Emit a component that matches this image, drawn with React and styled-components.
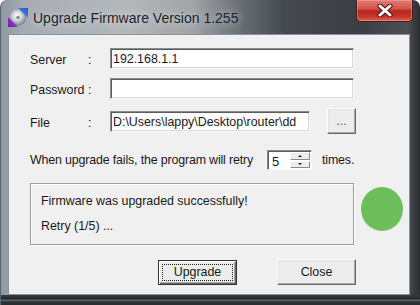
import React from "react"
import styled, { createGlobalStyle } from "styled-components"

const GlobalStyle = createGlobalStyle`
  html, body {
    margin: 0;
    padding: 0;
    background: #ffffff;
  }
  body {
    width: 420px;
    height: 305px;
    overflow: hidden;
    font-family: "Liberation Sans", Arial, sans-serif;
  }
`

const Window = styled.div`
  width: 420px;
  height: 305px;
  box-sizing: border-box;
  display: flex;
  flex-direction: column;
  padding-bottom: 10px;
  border-radius: 7px 7px 0 0;
  background:
    linear-gradient(
      to bottom,
      transparent 295px,
      #3a3d40 295px,
      #222426 299px,
      #6a6e72 300px,
      #2a2c2e 302px
    ),
    linear-gradient(
      90deg,
      #8e98a0 0%,
      #a6adb2 6%,
      #b4b8bb 30%,
      #a0a4a7 46%,
      #666b6f 58%,
      #45494d 68%,
      #3b3f43 86%,
      #4c5054 97%,
      #2a2c2e 100%
    );
  box-shadow: inset 1px 0 0 #566370;
`

const TitleBar = styled.div`
  height: 34px;
  flex: 0 0 34px;
  display: flex;
  align-items: flex-start;
  padding-left: 8px;
`

const AppIcon = styled.svg`
  width: 20px;
  height: 20px;
  margin-top: 7px;
  flex: 0 0 auto;
`

const Title = styled.span`
  margin-left: 5px;
  margin-top: 10px;
  font-size: 14px;
  line-height: 17px;
  color: #1b2530;
  text-shadow: 0 0 8px rgba(255, 255, 255, 0.75);
  white-space: nowrap;
`

const CloseButton = styled.div`
  margin-left: auto;
  margin-right: 7px;
  width: 57px;
  height: 22px;
  box-sizing: border-box;
  display: flex;
  align-items: center;
  justify-content: center;
  border: 1px solid #3d2422;
  border-top: none;
  border-radius: 0 0 5px 5px;
  background: linear-gradient(
    to bottom,
    #e07a72 0%,
    #d4574d 40%,
    #b9261c 52%,
    #c4352a 78%,
    #e0604f 100%
  );
  box-shadow: inset 0 0 0 1px rgba(255, 200, 190, 0.35);
`

const Client = styled.div`
  flex: 1;
  margin: 0 10px 0 8px;
  box-sizing: border-box;
  border: 1px solid #8b949c;
  background: #f0f0f0;
  padding: 13px 0 0 21px;
  color: #1a1a1a;
  font-size: 12.4px;
`

const Form = styled.div`
  width: 326px;
  display: flex;
  flex-direction: column;
`

const FieldRow = styled.div`
  display: grid;
  grid-template-columns: 58px 22px 1fr;
  align-items: center;
  height: 21px;
  margin-bottom: 9px;
`

const Label = styled.span`
  padding-top: 3px;
  white-space: nowrap;
`

const Field = styled.div`
  height: 21px;
  box-sizing: border-box;
  width: ${(p) => p.$width || "244px"};
  padding: 3px 2px 0;
  border: 1px solid;
  border-color: #8a8a8a #f6f6f6 #f6f6f6 #8a8a8a;
  box-shadow: inset 1px 1px 0 #5c5c5c, inset -1px -1px 0 #dadada;
  background: #ffffff;
  white-space: nowrap;
  overflow: hidden;
  line-height: 15px;
`

const FileCell = styled.div`
  display: flex;
  align-items: center;
  gap: 17px;
`

const Button = styled.div`
  position: relative;
  width: ${(p) => p.$width || "79px"};
  height: ${(p) => p.$height || "25px"};
  box-sizing: border-box;
  display: flex;
  align-items: center;
  justify-content: center;
  background: #ececec;
  border: 1px solid;
  border-color: ${(p) =>
    p.$default ? "#333 #333 #333 #333" : "#fdfdfd #6a6a6a #6a6a6a #fdfdfd"};
  box-shadow: ${(p) =>
    p.$default
      ? "inset 1px 1px 0 #ffffff, inset -1px -1px 0 #6a6a6a, inset -2px -2px 0 #a8a8a8"
      : "inset -1px -1px 0 #a8a8a8, inset 1px 1px 0 #e4e4e4"};
  color: ${(p) => (p.$muted ? "#5a5a5a" : "#1a1a1a")};
  font-size: 12.4px;

  ${(p) =>
    p.$default &&
    `
    &::after {
      content: "";
      position: absolute;
      inset: 3px;
      border: 1px dotted #222;
    }
  `}
`

const RetryRow = styled.div`
  display: flex;
  align-items: center;
  margin-top: 12px;
  height: 20px;
  white-space: nowrap;
  letter-spacing: -0.15px;
`

const SpinBox = styled.div`
  margin-left: 14px;
  margin-right: 10px;
  width: 45px;
  height: 20px;
  box-sizing: border-box;
  display: flex;
  border: 1px solid;
  border-color: #8a8a8a #f6f6f6 #f6f6f6 #8a8a8a;
  box-shadow: inset 1px 1px 0 #5c5c5c;
  background: #ffffff;
`

const SpinValue = styled.span`
  flex: 1;
  padding: 3px 0 0 4px;
  line-height: 15px;
  font-size: 13px;
`

const SpinButtons = styled.div`
  width: 20px;
  display: flex;
  flex-direction: column;
  padding: 1px 1px 1px 0;
  gap: 1px;
`

const SpinArrow = styled.div`
  flex: 1;
  display: flex;
  align-items: center;
  justify-content: center;
  background: #ececec;
  border: 1px solid;
  border-color: #fdfdfd #8a8a8a #8a8a8a #fdfdfd;

  &::before {
    content: "";
    width: 0;
    height: 0;
    border-left: 2px solid transparent;
    border-right: 2px solid transparent;
    ${(p) => (p.$up ? "border-bottom: 2px solid #222;" : "border-top: 2px solid #222;")}
  }
`

const StatusRow = styled.div`
  display: flex;
  align-items: flex-start;
  margin-top: 13px;
`

const StatusBox = styled.div`
  width: 324px;
  height: 62px;
  box-sizing: border-box;
  border: 1px solid #9c9c9c;
  box-shadow: 1px 1px 0 #ffffff, inset 1px 1px 0 #ffffff;
  padding: 10px 0 0 10px;
  display: flex;
  flex-direction: column;
  gap: 10px;
  line-height: 15px;
`

const Indicator = styled.div`
  margin-left: 7px;
  margin-top: 4px;
  width: 42px;
  height: 44px;
  border-radius: 50%;
  background: #6cbf5b;
`

const ButtonRow = styled.div`
  width: 326px;
  display: flex;
  justify-content: flex-end;
  align-items: center;
  gap: 40px;
  margin-top: 14px;
`

const App = () => (
  <>
    <GlobalStyle />
    <Window>
      <TitleBar>
        <AppIcon viewBox="0 0 20 20">
          <defs>
            <radialGradient id="disc" cx="45%" cy="40%" r="60%">
              <stop offset="0%" stopColor="#ffffff" />
              <stop offset="50%" stopColor="#d0d4d8" />
              <stop offset="100%" stopColor="#7a8188" />
            </radialGradient>
            <linearGradient id="blue" x1="0" y1="1" x2="1" y2="0">
              <stop offset="0%" stopColor="#5b9cf0" />
              <stop offset="100%" stopColor="#1f55c4" />
            </linearGradient>
            <linearGradient id="purple" x1="1" y1="0" x2="0" y2="1">
              <stop offset="0%" stopColor="#a04ad8" />
              <stop offset="100%" stopColor="#6a1fa8" />
            </linearGradient>
          </defs>
          <circle cx="10" cy="10.5" r="8" fill="url(#disc)" />
          <circle cx="10" cy="10.5" r="1.8" fill="#868c92" />
          <polygon points="10,1 20,1 20,11" fill="url(#blue)" />
          <polygon points="0,10 0,20 10,20" fill="url(#purple)" />
        </AppIcon>
        <Title>Upgrade Firmware Version 1.255</Title>
        <CloseButton>
          <svg width="16" height="13" viewBox="0 0 16 13">
            <path d="M3 2 L13 11 M13 2 L3 11" stroke="#3a1512" strokeWidth="5" strokeLinecap="round" />
            <path d="M3 2 L13 11 M13 2 L3 11" stroke="#ffffff" strokeWidth="3" strokeLinecap="round" />
          </svg>
        </CloseButton>
      </TitleBar>
      <Client>
        <Form>
          <FieldRow>
            <Label>Server</Label>
            <Label>:</Label>
            <Field>192.168.1.1</Field>
          </FieldRow>
          <FieldRow>
            <Label>Password</Label>
            <Label>:</Label>
            <Field />
          </FieldRow>
          <FieldRow>
            <Label>File</Label>
            <Label>:</Label>
            <FileCell>
              <Field $width="200px">D:\Users\lappy\Desktop\router\dd</Field>
              <Button $width="29px" $height="26px" $muted>...</Button>
            </FileCell>
          </FieldRow>
          <RetryRow>
            When upgrade fails, the program will retry
            <SpinBox>
              <SpinValue>5</SpinValue>
              <SpinButtons>
                <SpinArrow $up />
                <SpinArrow />
              </SpinButtons>
            </SpinBox>
            times.
          </RetryRow>
        </Form>
        <StatusRow>
          <StatusBox>
            <span>Firmware was upgraded successfully!</span>
            <span>Retry (1/5) ...</span>
          </StatusBox>
          <Indicator />
        </StatusRow>
        <ButtonRow>
          <Button $default>Upgrade</Button>
          <Button $height="26px">Close</Button>
        </ButtonRow>
      </Client>
    </Window>
  </>
)

export default App
